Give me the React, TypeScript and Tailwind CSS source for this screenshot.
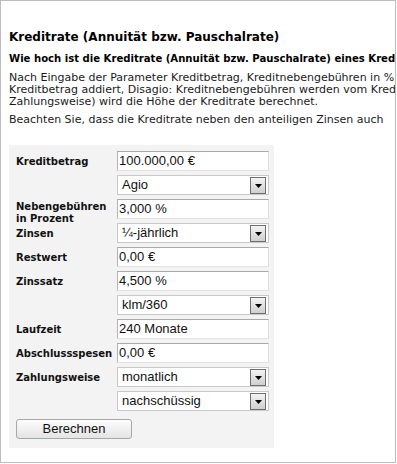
const rows: { label: string[]; value: string; select?: boolean }[] = [
  { label: ["Kreditbetrag"], value: "100.000,00 €" },
  { label: [], value: "Agio", select: true },
  { label: ["Nebengebühren", "in Prozent"], value: "3,000 %" },
  { label: ["Zinsen"], value: "¼-jährlich", select: true },
  { label: ["Restwert"], value: "0,00 €" },
  { label: ["Zinssatz"], value: "4,500 %" },
  { label: [], value: "klm/360", select: true },
  { label: ["Laufzeit"], value: "240 Monate" },
  { label: ["Abschlussspesen"], value: "0,00 €" },
  { label: ["Zahlungsweise"], value: "monatlich", select: true },
  { label: [], value: "nachschüssig", select: true },
];

function Field({ value, select }: { value: string; select?: boolean }) {
  if (select) {
    return (
      <div className="relative flex h-[20px] w-[152px] items-center border border-[#c9c9c9] bg-white pl-[4px] font-['Liberation_Sans',Arial,sans-serif] text-[13px] text-[#111]">
        {value}
        <span className="absolute right-[2px] top-[1px] flex h-[17px] w-[16px] items-center justify-center border border-[#6f6f6f] bg-gradient-to-b from-[#f4f4f4] to-[#cfcfcf]">
          <svg width="7" height="4" viewBox="0 0 7 4">
            <path d="M0 0h7L3.5 4z" fill="#000" />
          </svg>
        </span>
      </div>
    );
  }
  return (
    <div className="flex h-[20px] w-[152px] items-center border border-t-[#a9a9a9] border-l-[#b4b4b4] border-r-[#dedede] border-b-[#e2e2e2] bg-white pl-[1px] font-['Liberation_Sans',Arial,sans-serif] text-[13px] text-[#111]">
      {value}
    </div>
  );
}

export default function App() {
  return (
    <div className="h-[464px] w-[397px] bg-white">
      <div className="h-[463px] w-[396px] overflow-hidden border border-[#bdbdbd] font-['DejaVu_Sans',Verdana,sans-serif] text-black">
        <div className="whitespace-nowrap pl-[8px] pt-[28px]">
          <h1 className="text-[12px] font-bold leading-[16px]">Kreditrate (Annuität bzw. Pauschalrate)</h1>
          <h2 className="mt-[7px] text-[10.1px] font-bold leading-[13px]">
            Wie hoch ist die Kreditrate (Annuität bzw. Pauschalrate) eines Kreditbetrags?
          </h2>
          <p className="mt-[7px] text-[11px] leading-[12px] text-[#1a1a1a]">
            Nach Eingabe der Parameter Kreditbetrag, Kreditnebengebühren in %
            <br />
            Kreditbetrag addiert, Disagio: Kreditnebengebühren werden vom Kreditbetrag
            <br />
            Zahlungsweise) wird die Höhe der Kreditrate berechnet.
          </p>
          <p className="mt-[6px] text-[11px] leading-[12px] text-[#1a1a1a]">
            Beachten Sie, dass die Kreditrate neben den anteiligen Zinsen auch
          </p>
        </div>

        <div className="ml-[8px] mt-[19px] w-[265px] bg-[#f3f3f3] pb-[9px] pl-[7px] pr-[5px] pt-[6px]">
          <div className="grid grid-cols-[101px_152px] items-center gap-y-[4px]">
            {rows.map((r, i) => (
              <div key={i} className="contents">
                <div
                  className={
                    r.label.length > 1
                      ? "flex h-[20px] flex-col justify-start pt-[2px] text-[10px] font-bold leading-[12px] text-[#111]"
                      : "flex h-[20px] flex-col justify-center pt-[2px] text-[10px] font-bold leading-[12px] text-[#111]"
                  }
                >
                  {r.label.map((l, j) => (
                    <div key={j}>{l}</div>
                  ))}
                </div>
                <Field value={r.value} select={r.select} />
              </div>
            ))}
          </div>
          <button className="mt-[8px] flex h-[20px] w-[116px] items-center justify-center rounded-[3px] border border-[#a8a8a8] bg-gradient-to-b from-[#fdfdfd] to-[#e4e4e4] font-['Liberation_Sans',Arial,sans-serif] text-[13px] text-[#111]">
            Berechnen
          </button>
        </div>
      </div>
    </div>
  );
}
